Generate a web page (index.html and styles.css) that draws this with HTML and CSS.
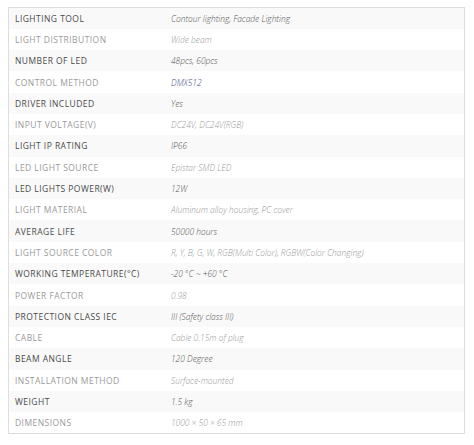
FILE: index.html
```html
<!DOCTYPE html>
<html>
<head>
<meta charset="utf-8">
<link rel="stylesheet" href="styles.css">
</head>
<body>
<table class="specs">
<tbody>
<tr><th>Lighting tool</th><td>Contour lighting, Facade Lighting</td></tr>
<tr><th>Light distribution</th><td>Wide beam</td></tr>
<tr><th>Number of LED</th><td>48pcs, 60pcs</td></tr>
<tr><th>Control method</th><td><a class="link">DMX512</a></td></tr>
<tr><th>Driver included</th><td>Yes</td></tr>
<tr><th>Input Voltage(V)</th><td>DC24V, DC24V(RGB)</td></tr>
<tr><th>Light IP rating</th><td>IP66</td></tr>
<tr><th>LED light source</th><td>Epistar SMD LED</td></tr>
<tr><th>LED Lights Power(W)</th><td>12W</td></tr>
<tr><th>Light material</th><td>Aluminum alloy housing, PC cover</td></tr>
<tr><th>Average life</th><td>50000 hours</td></tr>
<tr><th>Light source color</th><td>R, Y, B, G, W, RGB(Multi Color), RGBW(Color Changing)</td></tr>
<tr><th>Working temperature(°C)</th><td>-20 °C ~ +60 °C</td></tr>
<tr><th>Power factor</th><td>0.98</td></tr>
<tr><th>Protection class IEC</th><td>III (Safety class III)</td></tr>
<tr><th>Cable</th><td>Cable 0.15m of plug</td></tr>
<tr><th>Beam angle</th><td>120 Degree</td></tr>
<tr><th>Installation method</th><td>Surface-mounted</td></tr>
<tr><th>Weight</th><td>1.5 kg</td></tr>
<tr><th>Dimensions</th><td>1000 × 50 × 65 mm</td></tr>
</tbody>
</table>
</body>
</html>
```
FILE: styles.css
```css
html, body {
  margin: 0;
  padding: 0;
  background: #fff;
}
body {
  padding: 7px 8px 0 8px;
  font-family: "Open Sans", "DejaVu Sans", sans-serif;
}
.specs {
  width: 457px;
  border-collapse: collapse;
  border: 1px solid #dedede;
}
.specs tr {
  height: 21.3px;
}
.specs tr:nth-child(odd) {
  background: #f9f9f9;
}
.specs tr:nth-child(even) {
  background: #fff;
}
.specs th {
  text-align: left;
  font-weight: 500;
  font-size: 8.5px;
  letter-spacing: 0.45px;
  text-transform: uppercase;
  padding: 0 0 0 6px;
  width: 156px;
  vertical-align: middle;
}
.specs td {
  font-style: italic;
  font-weight: 300;
  font-size: 8.4px;
  padding: 0;
  vertical-align: middle;
}
.specs tr:nth-child(odd) th { color: #4a4a4a; }
.specs tr:nth-child(even) th { color: #9a9a9a; }
.specs tr:nth-child(odd) td { color: #555; }
.specs tr:nth-child(even) td { color: #999; }
.specs .link { color: #34497a; }
```
